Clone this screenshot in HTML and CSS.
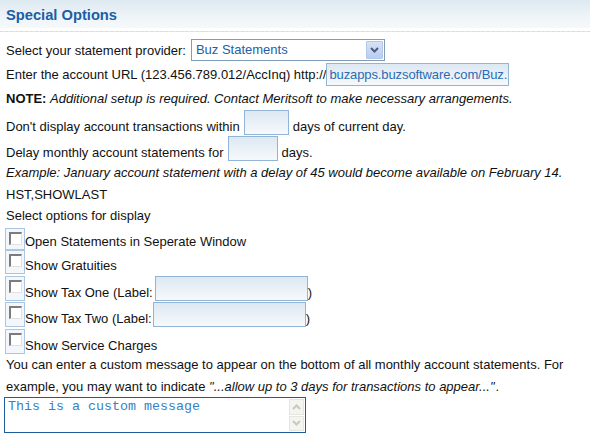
FILE: index.html
```html
<!DOCTYPE html>
<html>
<head>
<meta charset="utf-8">
<link rel="stylesheet" href="styles.css">
</head>
<body>
<div class="header"><h1 class="title">Special Options</h1></div>
<div class="content">
  <div class="row r-select">
    <span>Select your statement provider:</span>
    <div class="select">
      <span class="select-text">Buz Statements</span>
      <span class="select-btn"><svg width="9" height="6" viewBox="0 0 9 6"><path d="M1 1 L4.5 4.5 L8 1" fill="none" stroke="#4a5d80" stroke-width="2"/></svg></span>
    </div>
  </div>
  <div class="row r-url">
    <span>Enter the account URL (123.456.789.012/AccInq) http://</span>
    <div class="input url">buzapps.buzsoftware.com/Buz.</div>
  </div>
  <div class="row r-note"><span><b>NOTE:</b> <i>Additional setup is required. Contact Meritsoft to make necessary arrangements.</i></span></div>
  <div class="row low r-days">
    <span>Don't display account transactions within</span>
    <div class="input days1"></div>
    <span>days of current day.</span>
  </div>
  <div class="row low r-delay">
    <span>Delay monthly account statements for</span>
    <div class="input days2"></div>
    <span>days.</span>
  </div>
  <div class="row r-line"><i>Example: January account statement with a delay of 45 would become available on February 14.</i></div>
  <div class="row r-line2">HST,SHOWLAST</div>
  <div class="row r-line2">Select options for display</div>
  <div class="row low cb1"><span class="cbcell"><span class="box"></span></span><span>Open Statements in Seperate Window</span></div>
  <div class="row low cb2"><span class="cbcell"><span class="box"></span></span><span>Show Gratuities</span></div>
  <div class="row low cb3"><span class="cbcell"><span class="box"></span></span><span>Show Tax One (Label:</span><div class="input tax"></div><span>)</span></div>
  <div class="row low cb4"><span class="cbcell"><span class="box"></span></span><span>Show Tax Two (Label:</span><div class="input tax"></div><span>)</span></div>
  <div class="row low cb5"><span class="cbcell"><span class="box"></span></span><span>Show Service Charges</span></div>
  <p class="para">You can enter a custom message to appear on the bottom of all monthly account statements. For example, you may want to indicate <i class="quote">"...allow up to 3 days for transactions to appear..."</i>.</p>
  <div class="textarea">
    <div class="ta-text">This is a custom message</div>
    <div class="scroll">
      <span class="sbtn"><svg width="9" height="6" viewBox="0 0 9 6"><path d="M1 5 L4.5 1.5 L8 5" fill="none" stroke="#c9c9c0" stroke-width="2"/></svg></span>
      <span class="sbtn"><svg width="9" height="6" viewBox="0 0 9 6"><path d="M1 1 L4.5 4.5 L8 1" fill="none" stroke="#c9c9c0" stroke-width="2"/></svg></span>
    </div>
  </div>
</div>
</body>
</html>
```
FILE: styles.css
```css
* { box-sizing: border-box; }
body {
  margin: 0;
  font-family: "Liberation Sans", Arial, sans-serif;
  font-size: 13px;
  color: #111;
  background: #fff;
}
.header {
  height: 32px;
  border-bottom: 1px dashed #dcdcdc;
  background: linear-gradient(#dde9f1 0px, #eaf1f6 12px, #f6f9fb 28px, #fff 28px);
  padding: 0 6px;
}
.title {
  margin: 0;
  font-size: 14.7px;
  font-weight: bold;
  color: #1a5ea6;
  height: 30px;
  line-height: 31px;
}
.content { padding: 0 6px; }
.row {
  display: flex;
  align-items: center;
  white-space: nowrap;
}
.row.low { align-items: flex-end; }
.row.low > span { line-height: 17px; }
.r-select { margin-top: 7px; height: 22px; }
.r-url { margin-top: 2px; height: 23px; }
.r-note { height: 24px; }
.r-days { height: 25px; }
.r-delay { margin-top: 1px; height: 25px; }
.r-line { height: 23px; }
.r-line2 { height: 21px; }
.select {
  margin-left: 5px;
  width: 194px;
  height: 22px;
  border: 1px solid #7f9db9;
  display: flex;
  align-items: stretch;
  padding: 1px;
}
.select-text {
  flex: 1;
  color: #1c5fa5;
  font-size: 13px;
  padding-left: 3px;
  line-height: 18px;
}
.select-btn {
  width: 17px;
  background: linear-gradient(#d6e2f7, #b9cdf1);
  border: 1px solid #b4c6e9;
  border-radius: 1px;
  display: flex;
  align-items: center;
  justify-content: center;
}
.input {
  border: 1px solid #92b4d7;
  background: linear-gradient(#dde8f2, #f6f9fc);
}
.url {
  width: 183px;
  height: 23px;
  color: #2b6cb4;
  font-size: 13px;
  line-height: 21px;
  padding-left: 2px;
  letter-spacing: -0.1px;
}
.days1 { width: 45px; height: 25px; margin: 0 4px; }
.days2 { width: 50px; height: 25px; margin: 0 4px; }
.cb1 { margin-top: 2px; height: 22px; }
.cb2 { height: 24px; }
.cb3 { margin-top: 2px; height: 25px; }
.cb4 { margin-top: 1px; height: 25px; }
.cb5 { margin-top: 2px; height: 25px; }
.row.low > .cbcell {
  width: 20px;
  height: 100%;
  margin-left: -1px;
  border: 1px solid #aac6e3;
  background: #f3f7fb;
  display: flex;
  align-items: flex-start;
  justify-content: center;
  padding-top: 3px;
  flex: none;
  line-height: normal;
}
.box {
  width: 13px;
  height: 13px;
  border-top: 2px solid #7c7c7c;
  border-left: 2px solid #7c7c7c;
  border-right: 1px solid #e0e0e0;
  border-bottom: 1px solid #e0e0e0;
  background: #fff;
}
.tax { width: 153px; height: 25px; margin-left: 2px; }
.cb4 .tax { margin-left: 1px; }
.para {
  margin: 0;
  line-height: 22px;
  width: 578px;
}
.quote { padding-right: 1px; }
.textarea {
  margin-top: -1px;
  margin-left: -2px;
  width: 302px;
  height: 36px;
  border: 1px solid #1f5c9c;
  display: flex;
}
.ta-text {
  flex: 1;
  font-family: "Liberation Mono", "Courier New", monospace;
  font-size: 13.33px;
  color: #3a80c2;
  padding: 1px 3px;
  line-height: 15px;
}
.scroll {
  width: 16px;
  display: flex;
  flex-direction: column;
  gap: 1px;
  padding: 1px 1px 1px 0;
}
.sbtn {
  flex: 1;
  background: #f4f4f0;
  border: 1px solid #e6e6e0;
  display: flex;
  align-items: center;
  justify-content: center;
}
```
